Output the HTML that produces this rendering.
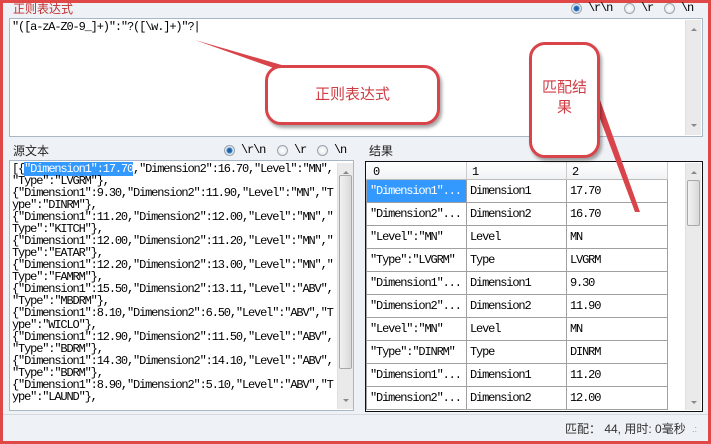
<!DOCTYPE html>
<html><head><meta charset="utf-8"><style>
*{margin:0;padding:0;box-sizing:border-box}
body{width:711px;height:444px;overflow:hidden;background:#e04848;position:relative;font-family:"Liberation Sans","Noto Sans CJK SC",sans-serif}
.win{position:absolute;left:3px;top:3px;width:705px;height:438px;background:#eef1f5}
.a{position:absolute}
.mono{font-family:"Liberation Mono","Noto Sans CJK SC",monospace;font-size:12px;letter-spacing:-1.15px;color:#000;white-space:pre}
.lbl{font-size:12px;font-family:"Liberation Sans","Noto Sans CJK SC",sans-serif}
.rad{position:absolute;width:11px;height:11px;border-radius:50%;border:1px solid #9aa3ab;background:radial-gradient(circle,#fff,#dde2e7)}
.rad.on{background:radial-gradient(circle,#1a4f8a 0,#2f7bc4 2.5px,#e6eef5 3.5px,#dfe5eb 6px)}
.box{position:absolute;background:#fff;border:1px solid #a9b6c4}
.sb{position:absolute;background:#eaeaea;border-left:1px solid #e0e0e0}
.thumb{position:absolute;left:1px;right:1px;background:linear-gradient(90deg,#f2f2f2,#d9d9d9);border:1px solid #a8a8a8;border-radius:2px}
.arr{position:absolute;left:5px;width:0;height:0;border-left:3px solid transparent;border-right:3px solid transparent}
.callout{position:absolute;background:#fff;border:3px solid #d9434a;border-radius:16px;color:#cf3d44;font-size:15px;text-align:center;box-shadow:2px 3px 3px rgba(0,0,0,.35)}
table{border-collapse:collapse}
td{border:1px solid #a0a0a0;height:23px;padding:0 0 0 3px;vertical-align:middle;line-height:12px}
</style></head><body>
<div class="win"></div>
<div class="a lbl" style="left:13px;top:0px;color:#c0302f">正则表达式</div>
<div class="rad on" style="left:571px;top:3px"></div><div class="a mono" style="left:588px;top:1px">\r\n</div>
<div class="rad" style="left:624px;top:3px"></div><div class="a mono" style="left:641px;top:1px">\r</div>
<div class="rad" style="left:664px;top:3px"></div><div class="a mono" style="left:681px;top:1px">\n</div>

<div class="box" style="left:9px;top:18px;width:694px;height:119px"></div>
<div class="sb" style="left:685px;top:20px;width:16px;height:115px"><div class="arr" style="top:8px;border-bottom:3px solid #888"></div><div class="arr" style="top:104px;border-top:3px solid #888"></div></div>
<div class="a mono" style="left:12px;top:20px">"([a-zA-Z0-9_]+)":"?([\w.]+)"?|</div>

<div class="a lbl" style="left:13px;top:142px;color:#222">源文本</div>
<div class="rad on" style="left:224px;top:145px"></div><div class="a mono" style="left:241px;top:143px">\r\n</div>
<div class="rad" style="left:277px;top:145px"></div><div class="a mono" style="left:294px;top:143px">\r</div>
<div class="rad" style="left:317px;top:145px"></div><div class="a mono" style="left:334px;top:143px">\n</div>
<div class="box" style="left:9px;top:160px;width:345px;height:251px"></div>
<div class="sb" style="left:337px;top:163px;width:16px;height:246px"><div class="arr" style="top:8px;border-bottom:3px solid #888"></div><div class="thumb" style="top:12px;height:194px"></div><div class="arr" style="top:236px;border-top:3px solid #888"></div></div>
<div class="a mono" style="left:12px;top:163px;line-height:12px">[{<span style="background:#3399ff;color:#fff">"Dimension1":17.70</span>,"Dimension2":16.70,"Level":"MN",
"Type":"LVGRM"},
{"Dimension1":9.30,"Dimension2":11.90,"Level":"MN","T
ype":"DINRM"},
{"Dimension1":11.20,"Dimension2":12.00,"Level":"MN","
Type":"KITCH"},
{"Dimension1":12.00,"Dimension2":11.20,"Level":"MN","
Type":"EATAR"},
{"Dimension1":12.20,"Dimension2":13.00,"Level":"MN","
Type":"FAMRM"},
{"Dimension1":15.50,"Dimension2":13.11,"Level":"ABV",
"Type":"MBDRM"},
{"Dimension1":8.10,"Dimension2":6.50,"Level":"ABV","T
ype":"WICLO"},
{"Dimension1":12.90,"Dimension2":11.50,"Level":"ABV",
"Type":"BDRM"},
{"Dimension1":14.30,"Dimension2":14.10,"Level":"ABV",
"Type":"BDRM"},
{"Dimension1":8.90,"Dimension2":5.10,"Level":"ABV","T
ype":"LAUND"},</div>

<div class="a lbl" style="left:369px;top:142px;color:#222">结果</div>
<div class="a" style="left:365px;top:161px;width:338px;height:251px;background:#fff;border:1px solid #111"></div>
<div class="a" style="left:366px;top:162px;width:301px;height:18px;background:linear-gradient(#fff,#f1f2f4);border-bottom:1px solid #bbb"></div>
<div class="a mono" style="left:373px;top:165px">0</div>
<div class="a mono" style="left:472px;top:165px">1</div>
<div class="a mono" style="left:572px;top:165px">2</div>
<div class="a" style="left:466px;top:162px;width:1px;height:18px;background:#ccc"></div>
<div class="a" style="left:566px;top:162px;width:1px;height:18px;background:#ccc"></div>
<div class="a" style="left:667px;top:162px;width:1px;height:18px;background:#ccc"></div>
<div class="a" style="left:366px;top:180px;width:302px;height:231px;overflow:hidden">
<table class="mono" style="margin-top:-1px">
<tr><td style="width:100px;background:#3399ff;color:#fff">"Dimension1"...</td><td style="width:100px">Dimension1</td><td style="width:101px">17.70</td></tr>
<tr><td>"Dimension2"...</td><td>Dimension2</td><td>16.70</td></tr>
<tr><td>"Level":"MN"</td><td>Level</td><td>MN</td></tr>
<tr><td>"Type":"LVGRM"</td><td>Type</td><td>LVGRM</td></tr>
<tr><td>"Dimension1"...</td><td>Dimension1</td><td>9.30</td></tr>
<tr><td>"Dimension2"...</td><td>Dimension2</td><td>11.90</td></tr>
<tr><td>"Level":"MN"</td><td>Level</td><td>MN</td></tr>
<tr><td>"Type":"DINRM"</td><td>Type</td><td>DINRM</td></tr>
<tr><td>"Dimension1"...</td><td>Dimension1</td><td>11.20</td></tr>
<tr><td>"Dimension2"...</td><td>Dimension2</td><td>12.00</td></tr>
</table></div>
<div class="sb" style="left:685px;top:163px;width:16px;height:247px"><div class="arr" style="top:8px;border-bottom:3px solid #888"></div><div class="thumb" style="top:17px;height:46px"></div><div class="arr" style="top:238px;border-top:3px solid #888"></div></div>

<div class="a" style="left:3px;top:414px;width:705px;height:1px;background:#d5dae0"></div>
<div class="a lbl" style="left:565px;top:420px;color:#333">匹配： 44, 用时: 0毫秒</div>
<div class="a" style="left:692px;top:424px;color:#999;font-size:9px">.:</div>

<svg class="a" style="left:0;top:0" width="711" height="444">
<polygon points="195,40 292,68 282,71" fill="#d9434a"/>
<polygon points="593,100 600,100 640,212 635,212" fill="#d9434a"/>
</svg>
<div class="callout" style="left:265px;top:65px;width:175px;height:60px;line-height:54px">正则表达式</div>
<div class="callout" style="left:529px;top:42px;width:71px;height:116px;padding-top:33px;line-height:20px">匹配结<br>果</div>
</body></html>
